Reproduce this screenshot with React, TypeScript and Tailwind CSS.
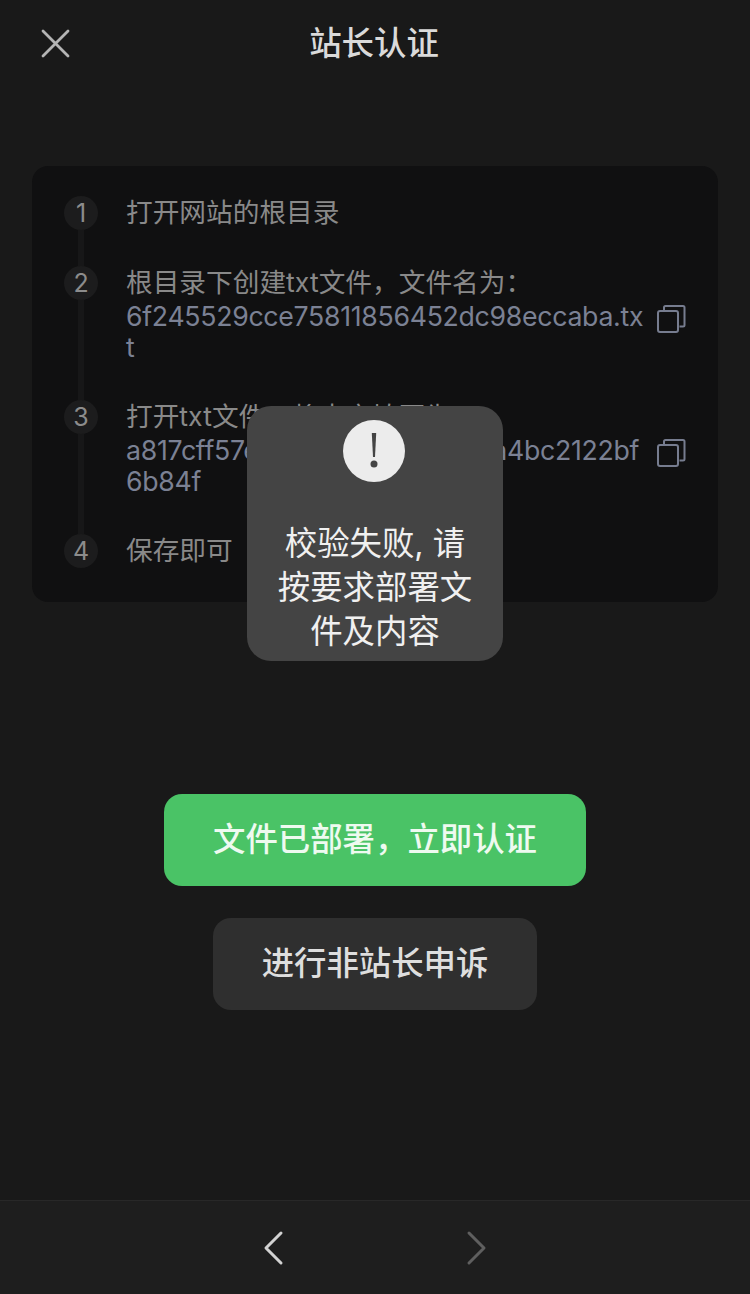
import React from "react";

const FONT = "font-['Inter','Noto_Sans_CJK_SC',sans-serif]";

function CopyIcon() {
  return (
    <svg width="30" height="30" viewBox="0 0 30 30" fill="none" stroke="#767c8f" strokeWidth="2" className="mt-[3px] shrink-0">
      <rect x="2" y="7" width="20" height="21" rx="2" />
      <path d="M8 6V3.500A1.500 1.500 0 0 1 9.500 2H27a1.500 1.500 0 0 1 1.500 1.500V21a1.500 1.500 0 0 1-1.500 1.500H23.500" />
    </svg>
  );
}

function Step({ n, last, children }: { n: number; last?: boolean; children: React.ReactNode }) {
  return (
    <div className="flex">
      <div className="flex w-[34px] shrink-0 flex-col items-center">
        <div className="flex h-[34px] w-[34px] shrink-0 items-center justify-center rounded-full bg-[#1c1c1d] text-[25px] leading-none text-[#8c8c8c]">
          {n}
        </div>
        {!last && <div className="w-[6px] flex-1 bg-[#171718]" />}
      </div>
      <div className={`ml-[28px] flex-1 ${last ? "" : "pb-[38px]"}`}>{children}</div>
    </div>
  );
}

function Hash({ lines }: { lines: string }) {
  return (
    <div className="mb-[-1px] mt-[3px] flex items-start">
      <div className="w-[521px] whitespace-pre-line break-all leading-[31px] tracking-[-0.3px] text-[#7b8194]">{lines}</div>
      <div className="ml-[9px]">
        <CopyIcon />
      </div>
    </div>
  );
}

export default function App() {
  return (
    <div className={`relative flex h-[1294px] w-[750px] flex-col overflow-hidden bg-[#191919] ${FONT}`}>
      <header className="relative flex h-[88px] shrink-0 items-center justify-center pr-[2px] text-[32.400px] font-medium text-[#dadada]">
        <svg width="30" height="30" viewBox="0 0 30 30" stroke="#b4b4b4" strokeWidth="2.800" strokeLinecap="round" className="absolute left-[40px] top-[28px]">
          <path d="M3 3 L28 28 M28 3 L3 28" />
        </svg>
        站长认证
      </header>

      <main className="flex flex-1 flex-col items-center">
        <section className="mt-[78px] w-[686px] rounded-[16px] bg-[#101011] pb-[34px] pl-[32px] pr-[30px] pt-[30px] text-[26.700px] leading-[32px] text-[#898989]">
          <Step n={1}>打开网站的根目录</Step>
          <Step n={2}>
            <div>{"根目录下创建txt文件\uFF0C文件名为\uFF1A"}</div>
            <Hash lines="6f245529cce75811856452dc98eccaba.txt" />
          </Step>
          <Step n={3}>
            <div>{"打开txt文件\uFF0C将内容填写为\uFF1A"}</div>
            <Hash lines={"a817cff57e1d2f7c90b3e6fd80a4bc2122bf\n6b84f"} />
          </Step>
          <Step n={4} last>
            保存即可
          </Step>
        </section>

        <button className="mt-[192px] flex h-[92px] w-[422px] items-center justify-center rounded-[18px] bg-[#4ac366] text-[32.400px] font-medium text-[#eefaf0]">
          {"文件已部署\uFF0C立即认证"}
        </button>
        <button className="mt-[32px] flex h-[92px] w-[324px] items-center justify-center rounded-[18px] bg-[#2f2f2f] text-[32.400px] font-medium text-[#dedede]">
          进行非站长申诉
        </button>
      </main>

      <footer className="flex h-[94px] shrink-0 items-center justify-center gap-[182px] border-t border-[#282828] bg-[#1e1e1e]">
        <svg width="22" height="38" viewBox="0 0 22 38" fill="none" stroke="#d2d2d2" strokeWidth="3" strokeLinecap="round" strokeLinejoin="round" className="ml-[2px]">
          <path d="M19 4 L4 19 L19 34" />
        </svg>
        <svg width="22" height="38" viewBox="0 0 22 38" fill="none" stroke="#5f5f5f" strokeWidth="3" strokeLinecap="round" strokeLinejoin="round" className="mr-[2px]">
          <path d="M3 4 L18 19 L3 34" />
        </svg>
      </footer>

      <div className="absolute left-[247px] top-[406px] flex h-[255px] w-[256px] flex-col items-center rounded-[24px] bg-[#444444] pt-[14px]">
        <div className="mr-[2px] flex h-[62px] w-[62px] items-center justify-center rounded-full bg-[#ececec]">
          <svg width="8" height="36" viewBox="0 0 8 36">
            <path d="M1.800 0 H6.200 L5 24 H3 Z" fill="#444" />
            <circle cx="4" cy="31" r="3.500" fill="#444" />
          </svg>
        </div>
        <div className="mt-[40px] w-[200px] text-center text-[32.400px] leading-[44px] text-[#f0f0f0]">校验失败, 请按要求部署文件及内容</div>
      </div>
    </div>
  );
}
